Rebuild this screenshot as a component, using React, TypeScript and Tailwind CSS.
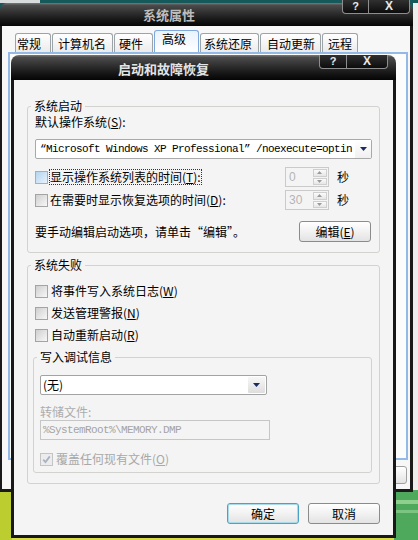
import React from 'react';

const titleBg =
  'bg-[linear-gradient(180deg,#7a7a7a_0%,#4b4b4b_10%,#2d2d2d_45%,#151515_75%,#050505_100%)]';
const mono = "[font-family:'Liberation_Mono',monospace] text-[11px] tracking-[-0.6px]";
const btnBg = 'bg-[linear-gradient(180deg,#ffffff_0%,#f3f3f3_45%,#e3e3e3_100%)]';

const tabs = [
  { label: '常规', w: 'w-[36px]', pl: 'pl-[1px]' },
  { label: '计算机名', w: 'w-[61px]', pl: 'pl-[5px]' },
  { label: '硬件', w: 'w-[39px]', pl: 'pl-[4px]' },
  { label: '高级', w: 'w-[45px]', pl: 'pl-[7px]', active: true },
  { label: '系统还原', w: 'w-[59px]', pl: 'pl-[3px]' },
  { label: '自动更新', w: 'w-[61px]', pl: 'pl-[6px]' },
  { label: '远程', w: 'w-[36px]', pl: 'pl-[5px]' },
];

function Key({ k }: { k: string }) {
  return (
    <>
      (<span className="underline underline-offset-[1px]">{k}</span>)
    </>
  );
}

function CaptionButtons({ help, close }: { help: string; close: string }) {
  return (
    <div className="flex">
      <div
        className={`flex h-[14px] ${help} items-center justify-center rounded-bl-[4px] border border-t-0 border-[#8e8e8e] bg-[linear-gradient(180deg,#303030,#0c0c0c)] pb-[1px] text-[11px] font-bold leading-none text-[#e8e8e8] [font-family:'Liberation_Sans',sans-serif]`}
      >
        ?
      </div>
      <div
        className={`-ml-px flex h-[14px] ${close} items-center justify-center rounded-br-[4px] border border-t-0 border-[#8e8e8e] bg-[linear-gradient(180deg,#303030,#0c0c0c)] pb-[1px] text-[12px] font-bold leading-none text-[#e8e8e8] [font-family:'Liberation_Sans',sans-serif]`}
      >
        X
      </div>
    </div>
  );
}

function Box({ kind = 'plain' }: { kind?: 'plain' | 'hot' | 'checked' }) {
  if (kind === 'hot')
    return (
      <span className="h-[13px] w-[13px] shrink-0 border border-[#8fb5d8] bg-[linear-gradient(135deg,#b4d4f0,#e8f3fc)]" />
    );
  if (kind === 'checked')
    return (
      <span className="flex h-[13px] w-[13px] shrink-0 items-center justify-center border border-[#c4c4c4] bg-[#ececec]">
        <svg width="9" height="9" viewBox="0 0 9 9">
          <path d="M1.2 4.6l2.3 2.4 4.3-5.6" fill="none" stroke="#a8b2c6" strokeWidth="1.8" />
        </svg>
      </span>
    );
  return (
    <span className="h-[13px] w-[13px] shrink-0 border border-[#a4a4a4] bg-[linear-gradient(135deg,#cfcfcf,#f7f7f7)]" />
  );
}

function Arrow() {
  return (
    <svg width="7" height="4" viewBox="0 0 7 4">
      <path d="M0 0h7L3.5 4z" fill="#1c2a64" />
    </svg>
  );
}

function SpinArrow({ up }: { up?: boolean }) {
  return (
    <div className="flex flex-1 items-center justify-center border border-[#cfcfcf] bg-[linear-gradient(180deg,#fbfbfb,#e6e6e6)]">
      <svg width="5" height="3" viewBox="0 0 5 3">
        <path d={up ? 'M0 3h5L2.5 0z' : 'M0 0h5L2.5 3z'} fill="#9a9a9a" />
      </svg>
    </div>
  );
}

function Spinner({ value }: { value: string }) {
  return (
    <div className="flex h-[20px] w-[44px] shrink-0 border border-[#cacaca] bg-[#f4f4f4]">
      <div className="flex-1 pl-[3px] text-[12px] leading-[18px] text-[#b4b4b4] [font-family:'Liberation_Sans',sans-serif]">
        {value}
      </div>
      <div className="flex w-[15px] flex-col gap-[1px] py-[1px] pr-[1px]">
        <SpinArrow up />
        <SpinArrow />
      </div>
    </div>
  );
}

function Button({ children, focused, w = 'w-[72px]' }: { children: React.ReactNode; focused?: boolean; w?: string }) {
  return (
    <div
      className={`flex h-[21px] ${w} shrink-0 items-center justify-center rounded-[3px] border ${btnBg} ${
        focused ? 'border-[#4aa3c4] shadow-[inset_0_0_0_1px_#a9dbeb]' : 'border-[#8b8b8b]'
      }`}
    >
      {children}
    </div>
  );
}

function OuterWindow() {
  return (
    <div className="absolute left-0 top-[3px] flex h-[489px] w-[413px] flex-col overflow-hidden rounded-t-[7px]">
      <div className={`h-[23px] shrink-0 ${titleBg} pl-[143px] text-[13px] font-bold leading-[24px] text-[#bdbdbd]`}>
        系统属性
      </div>
      <div className="flex flex-1 flex-col border-b-[3px] border-l-[2px] border-r-[3px] border-[#1a1a1a] bg-[#f7f7f7]">
        <div className="mt-[4px] flex h-[22px] items-end gap-[1px] pl-[13px]">
          {tabs.map((t) =>
            t.active ? (
              <div
                key={t.label}
                className={`${t.w} ${t.pl} h-[22px] rounded-t-[3px] border border-b-0 border-[#7ea8dc] bg-[linear-gradient(180deg,#e9f2fc,#ffffff)] text-[12px] leading-[15px]`}
              >
                {t.label}
              </div>
            ) : (
              <div
                key={t.label}
                className={`${t.w} ${t.pl} h-[19px] rounded-t-[3px] border border-b-0 border-[#9ca4a8] bg-[linear-gradient(180deg,#ffffff,#ebebeb)] text-[12px] leading-[19px]`}
              >
                {t.label}
              </div>
            ),
          )}
        </div>
        <div className="ml-[6px] mr-[2px] h-[408px] border-2 border-[#93b9e6] bg-[#fcfcfc]" />
        <div className="mt-[6px] flex justify-end pr-[3px]">
          <div className={`h-[18px] w-[70px] rounded-[3px] border border-[#a0a0a0] ${btnBg}`} />
        </div>
      </div>
    </div>
  );
}

function BootDialog() {
  return (
    <div className="absolute left-[11px] top-[55px] flex h-[483px] w-[385px] flex-col overflow-hidden rounded-t-[8px]">
      <div className={`relative h-[25px] shrink-0 ${titleBg} pl-[107px] text-[13px] font-bold leading-[27px] text-[#e4e4e4]`}>
        启动和故障恢复
        <div className="absolute left-[308px] top-0">
          <CaptionButtons help="w-[28px]" close="w-[42px]" />
        </div>
      </div>
      <div className="flex min-w-0 flex-1 flex-col border-x-[3px] border-b-[3px] border-[#181818] bg-[#f4f4f4] px-[13px]">
        {/* 系统启动 */}
        <fieldset className="mt-[18px] min-w-0 rounded-[3px] border border-[#d2d2ce] px-[7px] pb-[10px]">
          <legend className="ml-[-4px] px-[3px] leading-[16px]">系统启动</legend>
          <div className="h-[16px] leading-[16px]">
            默认操作系统<Key k="S" />:
          </div>
          <div className="mt-[9px] flex h-[20px] items-center rounded-[2px] border border-[#a9a9a9] bg-white">
            <div className={`min-w-0 flex-1 overflow-hidden whitespace-nowrap pl-[4px] ${mono}`}>
              “Microsoft Windows XP Professional” /noexecute=optin
            </div>
            <div className="flex h-[18px] w-[16px] shrink-0 items-center justify-center bg-[linear-gradient(180deg,#ffffff,#f0f0f0)]">
              <Arrow />
            </div>
          </div>
          <div className="mt-[8px] flex h-[20px] items-center">
            <Box kind="hot" />
            <span className="ml-[1px] border border-dotted border-[#333] leading-[14px]">
              显示操作系统列表的时间<Key k="T" />:
            </span>
            <div className="flex-1" />
            <Spinner value="0" />
            <span className="ml-[8px] mr-[23px] leading-[16px]">秒</span>
          </div>
          <div className="mt-[3px] flex h-[20px] items-center">
            <Box />
            <span className="ml-[1px] border border-transparent leading-[14px]">
              在需要时显示恢复选项的时间<Key k="D" />:
            </span>
            <div className="flex-1" />
            <Spinner value="30" />
            <span className="ml-[8px] mr-[23px] leading-[16px]">秒</span>
          </div>
          <div className="mt-[11px] flex h-[21px] items-center justify-between">
            <span className="leading-[16px]">要手动编辑启动选项，请单击“编辑”。</span>
            <div className="mr-[1px]">
              <Button>
                编辑<Key k="E" />
              </Button>
            </div>
          </div>
        </fieldset>

        {/* 系统失败 */}
        <fieldset className="mt-[4px] min-w-0 rounded-[3px] border border-[#d2d2ce] px-[7px] pb-[10px]">
          <legend className="ml-[-4px] px-[3px] leading-[16px]">系统失败</legend>
          <div className="mt-[10px] flex h-[16px] items-center gap-[3px]">
            <Box />
            <span className="leading-[16px]">
              将事件写入系统日志<Key k="W" />
            </span>
          </div>
          <div className="mt-[6px] flex h-[16px] items-center gap-[3px]">
            <Box />
            <span className="leading-[16px]">
              发送管理警报<Key k="N" />
            </span>
          </div>
          <div className="mt-[6px] flex h-[16px] items-center gap-[3px]">
            <Box />
            <span className="leading-[16px]">
              自动重新启动<Key k="R" />
            </span>
          </div>

          <fieldset className="ml-[-2px] mt-[6px] w-[339px] min-w-0 rounded-[3px] border border-[#d2d2ce] pb-[5px] pl-[6px]">
            <legend className="ml-[-3px] px-[3px] leading-[16px]">写入调试信息</legend>
            <div className="mt-[10px] flex h-[20px] w-[227px] items-center rounded-[2px] border border-[#a3a3a3] bg-white">
              <div className="flex-1 pl-[2px] leading-[16px]">(无)</div>
              <div className="mr-[1px] flex h-[16px] w-[17px] items-center justify-center rounded-[1px] bg-[linear-gradient(180deg,#f7f7f7,#dedede)]">
                <Arrow />
              </div>
            </div>
            <div className="mt-[9px] h-[16px] leading-[16px] text-[#acacac]">转储文件:</div>
            <div className="flex h-[20px] w-[230px] items-center border border-[#c6c6c6] bg-[#f4f4f4]">
              <span className={`pl-[2px] text-[#a4a4a4] ${mono}`}>%SystemRoot%\MEMORY.DMP</span>
            </div>
            <div className="mt-[11px] flex h-[16px] items-center gap-[3px] text-[#a8a8a8]">
              <Box kind="checked" />
              <span className="leading-[16px]">
                覆盖任何现有文件<Key k="O" />
              </span>
            </div>
          </fieldset>
        </fieldset>

        <div className="mt-[19px] flex justify-end gap-[9px]">
          <Button focused>确定</Button>
          <Button>取消</Button>
        </div>
      </div>
    </div>
  );
}

export default function App() {
  return (
    <div className="relative h-[540px] w-[418px] overflow-hidden bg-[#15595b] text-[12px] text-black [font-family:'Noto_Sans_CJK_SC','Noto_Sans',sans-serif]">
      <div className="absolute left-0 top-0 h-[3px] w-[40px] bg-[#d9dcdc]" />
      {/* wallpaper */}
      <div className="absolute bottom-0 left-0 right-0 flex h-[52px]">
        <div className="w-[12px] bg-[#bccd2f]" />
        <div className="flex-1 bg-[#d8db46]" />
        <div className="flex w-[24px] flex-col bg-[#4ea95c]">
          <div className="mt-[12px] h-[4px] bg-[#8fd08f]" />
          <div className="mt-[6px] h-[3px] bg-[#7cc482]" />
        </div>
      </div>
      <div className="absolute right-0 top-[3px] h-[487px] w-[5px] bg-[#ededed]" />
      <OuterWindow />
      <div className="absolute left-[342px] top-0">
        <CaptionButtons help="w-[27px]" close="w-[42px]" />
      </div>
      <BootDialog />
    </div>
  );
}
